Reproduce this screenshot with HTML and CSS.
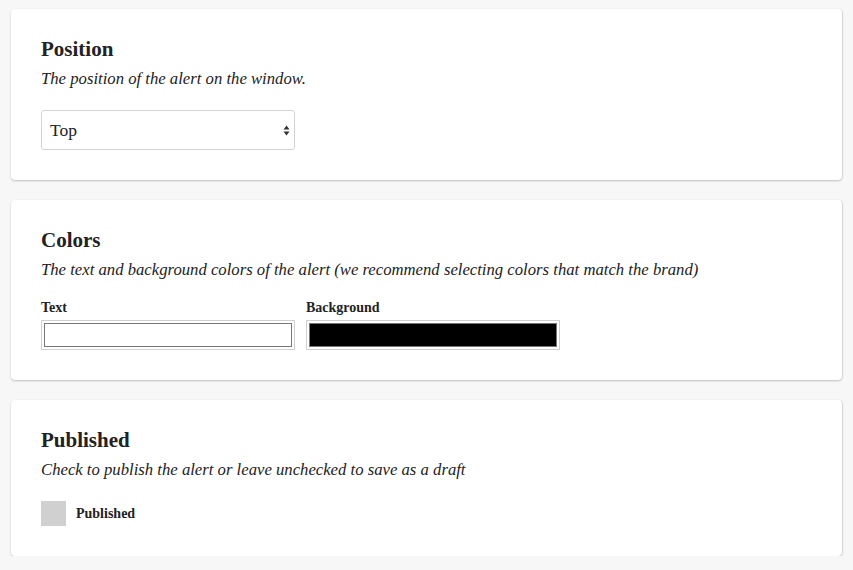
FILE: index.html
```html
<!DOCTYPE html>
<html>
<head>
<meta charset="utf-8">
<link rel="stylesheet" href="styles.css">
</head>
<body>
<div class="page">
  <section class="card card-position">
    <h2 class="title">Position</h2>
    <p class="desc">The position of the alert on the window.</p>
    <div class="select">
      <span class="select-value">Top</span>
      <svg class="select-arrows" width="7" height="11" viewBox="0 0 7 11"><path d="M3.5 0.5 L6.5 4.5 H0.5 Z M3.5 10.5 L6.5 6.5 H0.5 Z" fill="#333"/></svg>
    </div>
  </section>
  <section class="card card-colors">
    <h2 class="title">Colors</h2>
    <p class="desc">The text and background colors of the alert (we recommend selecting colors that match the brand)</p>
    <div class="color-row">
      <div class="field">
        <label class="label">Text</label>
        <div class="color-input"><span class="swatch swatch-white"></span></div>
      </div>
      <div class="field">
        <label class="label">Background</label>
        <div class="color-input"><span class="swatch swatch-black"></span></div>
      </div>
    </div>
  </section>
  <section class="card card-published">
    <h2 class="title">Published</h2>
    <p class="desc">Check to publish the alert or leave unchecked to save as a draft</p>
    <div class="check-row">
      <span class="checkbox"></span>
      <span class="label check-label">Published</span>
    </div>
  </section>
</div>
</body>
</html>
```
FILE: styles.css
```css
html, body {
  margin: 0;
  padding: 0;
  background: #f7f7f7;
}
.page {
  padding: 9px 11px 0 11px;
  display: flex;
  flex-direction: column;
  gap: 20px;
}
.card {
  background: #fff;
  border-radius: 4px;
  box-shadow: 0 1px 2px rgba(0,0,0,0.22), 1px 0 1px rgba(0,0,0,0.08);
  padding: 28px 30px 0 30px;
  box-sizing: border-box;
}
.card-position { height: 171px; }
.card-colors { height: 180px; }
.card-published { height: 156px; }
.title {
  margin: 0;
  font-family: "Liberation Serif", "Times New Roman", serif;
  font-weight: bold;
  font-size: 21px;
  line-height: 24px;
  color: #222;
}
.desc {
  margin: 8px 0 0 0;
  font-family: "Liberation Serif", "Times New Roman", serif;
  font-style: italic;
  font-size: 16.7px;
  line-height: 20px;
  color: #222;
}
.select {
  margin-top: 21px;
  width: 254px;
  height: 40px;
  box-sizing: border-box;
  border: 1px solid #d4d4d4;
  border-radius: 3px;
  display: flex;
  align-items: center;
  justify-content: space-between;
  padding: 0 4px 0 8px;
}
.select-value {
  font-family: "Liberation Serif", "Times New Roman", serif;
  font-size: 17.5px;
  color: #222;
}
.color-row {
  margin-top: 19px;
  display: flex;
  gap: 11px;
}
.field {
  display: flex;
  flex-direction: column;
}
.label {
  font-family: "Liberation Serif", "Times New Roman", serif;
  font-weight: bold;
  font-size: 14px;
  line-height: 18px;
  color: #222;
}
.color-input {
  margin-top: 3px;
  width: 254px;
  height: 30px;
  box-sizing: border-box;
  border: 1px solid #d0d0d0;
  padding: 2px;
  display: flex;
}
.swatch {
  flex: 1;
  border: 1px solid #777;
}
.swatch-white { background: #fff; }
.swatch-black { background: #000; }
.check-row {
  margin-top: 21px;
  display: flex;
  align-items: center;
  gap: 10px;
}
.checkbox {
  width: 25px;
  height: 25px;
  background: #d0d0d0;
}
```
